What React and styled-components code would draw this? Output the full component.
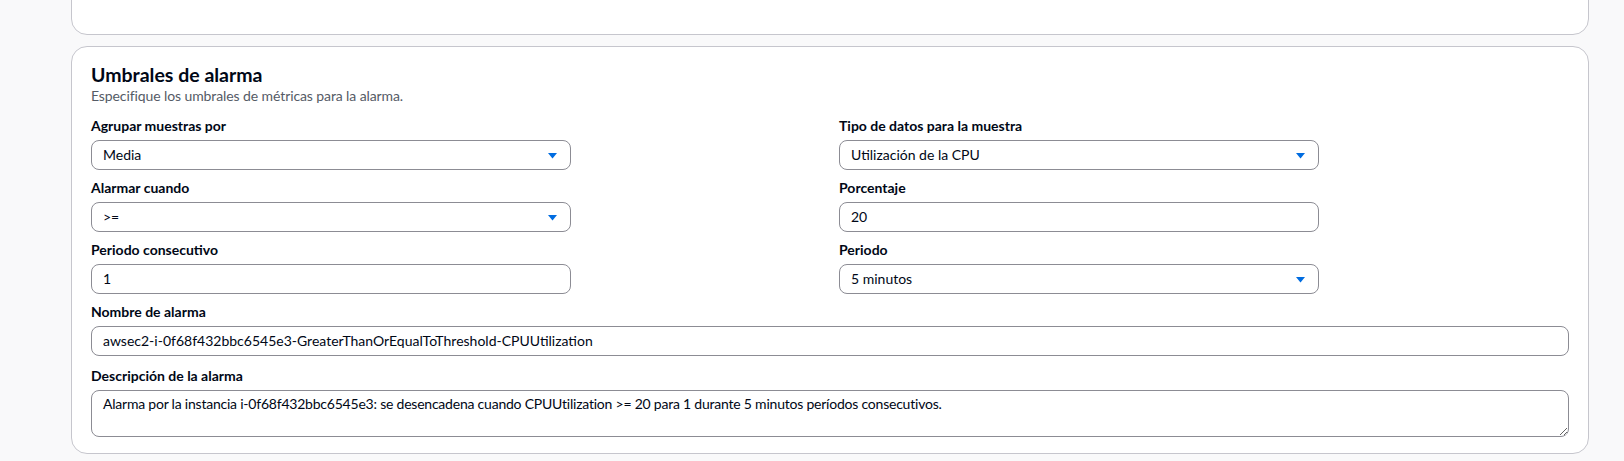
import React from 'react';
import styled, { createGlobalStyle } from 'styled-components';

const GlobalStyle = createGlobalStyle`
  html, body {
    margin: 0;
    padding: 0;
    background: #f9f9fa;
    font-family: Lato, "Open Sans", sans-serif;
    color: #000716;
    overflow: hidden;
  }
`;

const Page = styled.div`
  display: flex;
  flex-direction: column;
  gap: 11px;
  padding: 0 35px 0 71px;
  height: 461px;
`;

const Card = styled.section`
  background: #ffffff;
  border: 1px solid #c6c6cd;
  border-radius: 16px;
  padding: ${(p) => p.$padding || '17px 19px 16px'};
  margin-top: ${(p) => p.$offset || '0'};
`;

const Hint = styled.div`
  font-size: 14px;
  line-height: 20px;
  color: #000716;
`;

const Header = styled.header`
  display: flex;
  flex-direction: column;
`;

const Title = styled.h2`
  margin: 0;
  font-size: 19.5px;
  line-height: 22px;
  font-weight: 700;
  color: #000716;
`;

const Subtitle = styled.p`
  margin: 0;
  font-size: 14px;
  line-height: 20px;
  color: #555b66;
  letter-spacing: -0.1px;
`;

const FormGrid = styled.div`
  display: grid;
  grid-template-columns: 1fr 1fr;
  column-gap: 18px;
  row-gap: 8px;
  margin-top: 10px;
`;

const Field = styled.div`
  display: flex;
  flex-direction: column;
  gap: 4px;
  grid-column: ${(p) => (p.$wide ? '1 / -1' : 'auto')};
  margin-top: ${(p) => p.$shift || '0'};
`;

const Label = styled.label`
  font-size: 14px;
  line-height: 20px;
  font-weight: 700;
  color: #000716;
`;

const Box = styled.div`
  box-sizing: border-box;
  display: flex;
  align-items: center;
  justify-content: space-between;
  width: ${(p) => (p.$wide ? '100%' : '480px')};
  height: 30px;
  padding: 0 13px 0 11px;
  border: 1px solid #8c8c94;
  border-radius: 8px;
  background: #ffffff;
  font-size: 14px;
  line-height: 20px;
  color: #000716;
`;

const Caret = styled.svg`
  width: 9px;
  height: 6px;
  margin-top: 2px;
  flex: none;
`;

const TextArea = styled.textarea`
  box-sizing: border-box;
  width: 100%;
  height: 47px;
  padding: 3px 11px;
  border: 1px solid #8c8c94;
  border-radius: 8px;
  background: #ffffff;
  font-family: inherit;
  font-size: 14px;
  line-height: 20px;
  letter-spacing: -0.22px;
  color: #000716;
  resize: vertical;
  outline: none;
`;

function Select({ value }) {
  return (
    <Box>
      <span>{value}</span>
      <Caret viewBox="0 0 9 6">
        <path d="M0 0h9L4.5 5.5z" fill="#006ce0" />
      </Caret>
    </Box>
  );
}

function Input({ value, wide }) {
  return (
    <Box $wide={wide}>
      <span>{value}</span>
    </Box>
  );
}

export default function App() {
  const description =
    'Alarma por la instancia i-0f68f432bbc6545e3: se desencadena cuando CPUUtilization >= 20 para 1 durante 5 minutos períodos consecutivos.';

  return (
    <>
      <GlobalStyle />
      <Page>
        <Card $offset="-39px" $padding="20px 19px 32px">
          <Hint>Especifique qué pasos se aplican para la alarma.</Hint>
        </Card>

        <Card>
          <Header>
            <Title>Umbrales de alarma</Title>
            <Subtitle>Especifique los umbrales de métricas para la alarma.</Subtitle>
          </Header>

          <FormGrid>
            <Field>
              <Label>Agrupar muestras por</Label>
              <Select value="Media" />
            </Field>
            <Field>
              <Label>Tipo de datos para la muestra</Label>
              <Select value="Utilización de la CPU" />
            </Field>
            <Field>
              <Label>Alarmar cuando</Label>
              <Select value=">=" />
            </Field>
            <Field>
              <Label>Porcentaje</Label>
              <Input value="20" />
            </Field>
            <Field>
              <Label>Periodo consecutivo</Label>
              <Input value="1" />
            </Field>
            <Field>
              <Label>Periodo</Label>
              <Select value="5 minutos" />
            </Field>
            <Field $wide>
              <Label>Nombre de alarma</Label>
              <Input wide value="awsec2-i-0f68f432bbc6545e3-GreaterThanOrEqualToThreshold-CPUUtilization" />
            </Field>
            <Field $wide $shift="2px">
              <Label>Descripción de la alarma</Label>
              <TextArea defaultValue={description} />
            </Field>
          </FormGrid>
        </Card>
      </Page>
    </>
  );
}
